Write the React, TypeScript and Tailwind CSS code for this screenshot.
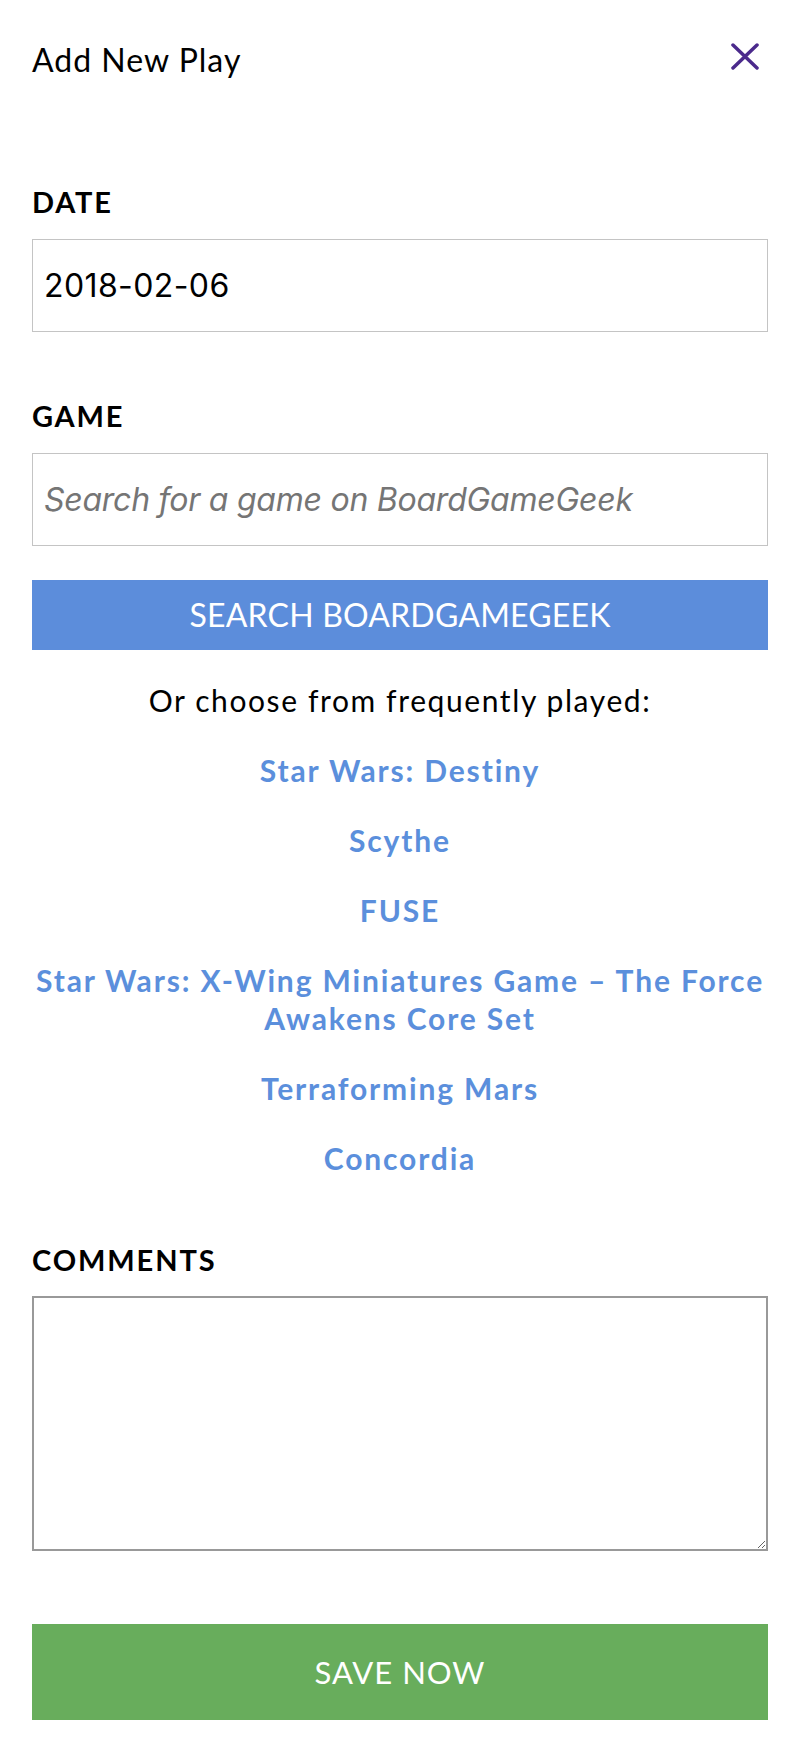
import React from "react";

const games = [
  "Star Wars: Destiny",
  "Scythe",
  "FUSE",
  "Star Wars: X-Wing Miniatures Game – The Force Awakens Core Set",
  "Terraforming Mars",
  "Concordia",
];

export default function App() {
  return (
    <div className="min-h-[1760px] bg-white px-8 font-['Lato',sans-serif] text-black">
      {/* header */}
      <div className="flex items-start justify-between pt-[40px]">
        <h1 className="text-[32px] leading-[40px] font-normal tracking-[1px]">Add New Play</h1>
        <button className="mt-[3px] mr-[9px]" aria-label="Close">
          <svg width="28" height="27" viewBox="0 0 28 27">
            <path d="M2 2 L26 25 M26 2 L2 25" stroke="#4b2a8c" strokeWidth="3.5" strokeLinecap="round" />
          </svg>
        </button>
      </div>

      <form className="flex flex-col" onSubmit={(e) => e.preventDefault()}>
        <label className="mt-[104px] text-[29px] leading-[36px] font-bold tracking-[1.8px]">DATE</label>
        <input
          type="text"
          defaultValue="2018-02-06"
          className="mt-[19px] h-[93px] w-full border border-[#c4c4c4] px-[11px] font-['Inter',sans-serif] text-[32px] tracking-[0.4px] text-black outline-none"
        />

        <label className="mt-[66px] text-[29px] leading-[36px] font-bold tracking-[1.8px]">GAME</label>
        <input
          type="text"
          placeholder="Search for a game on BoardGameGeek"
          className="mt-[19px] h-[93px] w-full border border-[#c4c4c4] px-[11px] font-['Inter',sans-serif] text-[32px] tracking-[-0.25px] text-black outline-none placeholder:italic placeholder:text-[#757575]"
        />

        <button
          type="button"
          className="mt-[34px] h-[70px] w-full bg-[#5c8ddb] text-[32px] font-normal tracking-[0.2px] text-white"
        >
          SEARCH BOARDGAMEGEEK
        </button>

        <p className="mt-[31px] text-center text-[30px] leading-[38px] tracking-[1.6px]">
          Or choose from frequently played:
        </p>

        <div className="mt-[32px] flex flex-col gap-[32px]">
          {games.map((g) => (
            <a
              key={g}
              href="#"
              className="text-center text-[30px] leading-[38px] font-bold tracking-[1.85px] text-[#5b8fdc]"
            >
              {g}
            </a>
          ))}
        </div>

        <label className="mt-[65px] text-[29px] leading-[36px] font-bold tracking-[1.9px]">COMMENTS</label>
        <textarea className="mt-[18px] h-[255px] w-full border-2 border-[#999] outline-none" />

        <button
          type="submit"
          className="mt-[73px] h-[96px] w-full bg-[#68ad5c] text-[31px] font-normal tracking-[1px] text-white"
        >
          SAVE NOW
        </button>
      </form>
    </div>
  );
}
